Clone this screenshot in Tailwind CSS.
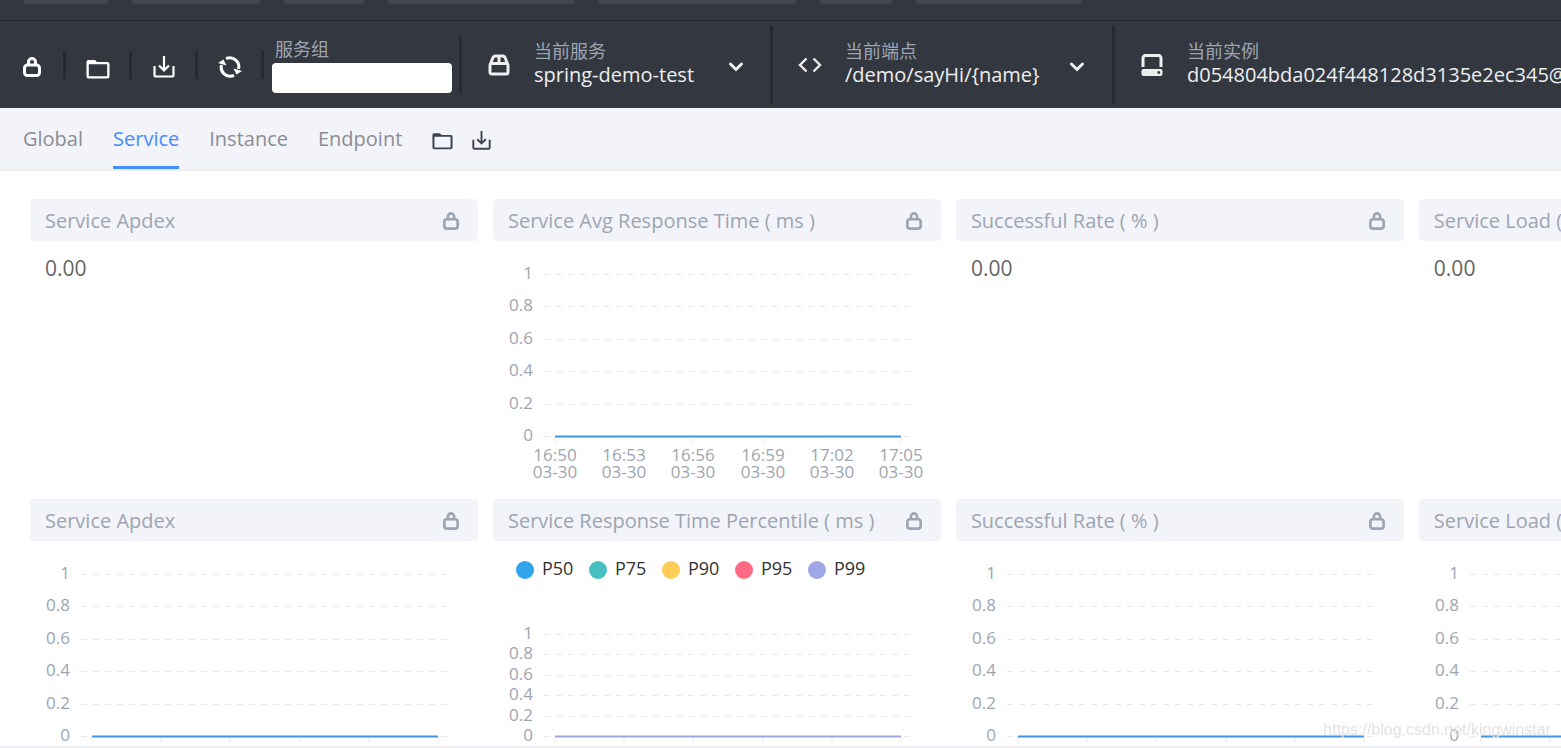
<!DOCTYPE html>
<html lang="zh">
<head>
    <meta charset="UTF-8">
    <meta name="viewport" content="width=device-width, initial-scale=1.0">
    <title>Dashboard</title>
    <script src="https://cdn.jsdelivr.net/npm/@tailwindcss/browser@4"></script>
</head>
<body class="flex flex-col h-screen overflow-hidden bg-white font-['Open_Sans','Noto_Sans_CJK_SC',sans-serif]">
    <!-- Icons -->
    <svg class="hidden">
        <symbol id="lock" viewBox="0 0 18 20" fill="none" stroke="currentColor" stroke-width="3">
            <rect x="1.5" y="8" width="15" height="10.5" rx="3"/>
            <path d="M5.500 8V5a3.500 3.500 0 0 1 7 0V8"/>
        </symbol>
        <symbol id="folder" viewBox="0 0 24 20">
            <path fill="currentColor" fill-rule="evenodd" d="M2.500 1H9l2 2H21.500a2 2 0 0 1 2 2V17.500a2 2 0 0 1-2 2H2.500a2 2 0 0 1-2-2V3a2 2 0 0 1 2-2ZM2.800 5.200V17.300H21.200V5.200Z"/>
        </symbol>
        <symbol id="download" viewBox="0 0 22 22" fill="none" stroke="currentColor" stroke-width="2.200">
            <path d="M1.500 10V19.500a1 1 0 0 0 1 1h17a1 1 0 0 0 1-1V10"/>
            <path d="M11 0V14M6 9.500L11 14.500L16 9.500"/>
        </symbol>
        <symbol id="chevron" viewBox="0 0 16 10" fill="none" stroke="currentColor" stroke-width="3" stroke-linecap="round">
            <path d="M2.500 2L8 7.500L13.500 2"/>
        </symbol>
    </svg>

    <header class="bg-[#333840] text-[#eeeeee] shrink-0">
        <!-- Dashboard templates -->
        <div class="h-[21px] border-b border-[#252a2f] flex gap-[23px] pl-[23px]">
            <div class="h-1 w-[86px] rounded-b bg-[#42464e]"></div>
            <div class="h-1 w-[128px] rounded-b bg-[#42464e]"></div>
            <div class="h-1 w-[82px] rounded-b bg-[#42464e]"></div>
            <div class="h-1 w-[187px] rounded-b bg-[#42464e]"></div>
            <div class="h-1 w-[198px] rounded-b bg-[#42464e]"></div>
            <div class="h-1 w-[74px] rounded-b bg-[#42464e]"></div>
            <div class="h-1 w-[166px] rounded-b bg-[#42464e]"></div>
        </div>

        <!-- Toolbar -->
        <div class="h-[87px] flex items-center">
            <div class="flex shrink-0 text-white">
                <button aria-label="Lock" class="w-[66px] h-7 border-r-3 border-[#252a2f] flex items-center justify-center">
                    <svg class="w-[18px] h-5 mt-1"><use href="#lock"/></svg>
                </button>
                <button aria-label="Import" class="w-[66px] h-7 border-r-3 border-[#252a2f] flex items-center justify-center">
                    <svg class="w-6 h-5 mt-2"><use href="#folder"/></svg>
                </button>
                <button aria-label="Export" class="w-[66px] h-7 border-r-3 border-[#252a2f] flex items-center justify-center">
                    <svg class="w-[22px] h-[22px] mt-1"><use href="#download"/></svg>
                </button>
                <button aria-label="Reload" class="w-[66px] h-7 border-r-3 border-[#252a2f] flex items-center justify-center">
                    <svg class="w-6 h-[22px] mt-1" viewBox="0 0 24 22" fill="none" stroke="currentColor" stroke-width="3">
                        <path d="M8 2.600A9 9 0 0 1 20.500 13M16 19.400A9 9 0 0 1 3.500 9"/>
                        <path fill="currentColor" stroke="none" d="M0 7L5.500 3.500L8.500 9.500ZM24 15L18.500 18.500L15.500 12.500Z"/>
                    </svg>
                </button>
            </div>
            <div class="h-[57px] w-[198px] shrink-0 border-r-3 border-[#252a2f] pl-2">
                <label for="group" class="block h-[27px] pl-[3px] text-[18px] leading-[27px] text-[#9da5b2]">服务组</label>
                <input id="group" type="text" class="block w-[180px] h-[30px] rounded bg-white px-2 text-black">
            </div>

            <button class="w-[311px] h-[78px] shrink-0 border-r-3 border-[#252a2f] flex items-center pl-[25px] text-left">
                <svg class="w-6 h-6" viewBox="0 0 24 24" fill="none" stroke="currentColor" stroke-width="3">
                    <path d="M3 12L6 4.500Q6.500 3 8 3H16Q17.500 3 18 4.500L21 12V19a2 2 0 0 1-2 2H5a2 2 0 0 1-2-2ZM3 10.500H21M12 3V10"/>
                </svg>
                <span class="ml-[23px] w-[194px] pb-1 whitespace-nowrap">
                    <span class="block text-[18px] leading-6 text-[#9da5b2]">当前服务</span>
                    <span class="block text-[20px] leading-6">spring-demo-test</span>
                </span>
                <svg class="w-4 h-[10px] mt-1"><use href="#chevron"/></svg>
            </button>
            <button class="w-[342px] h-[78px] shrink-0 border-r-3 border-[#252a2f] flex items-center pl-[25px] text-left">
                <svg class="w-6 h-6" viewBox="0 0 24 24" fill="none" stroke="currentColor" stroke-width="2.400">
                    <path d="M8.500 5.500L2 12L8.500 18.500M15.500 5.500L22 12L15.500 18.500"/>
                </svg>
                <span class="ml-[23px] w-[224px] pb-1 whitespace-nowrap">
                    <span class="block text-[18px] leading-6 text-[#9da5b2]">当前端点</span>
                    <span class="block text-[20px] leading-6">/demo/sayHi/{name}</span>
                </span>
                <svg class="w-4 h-[10px] mt-1"><use href="#chevron"/></svg>
            </button>
            <button class="h-[78px] shrink-0 flex items-center pl-[25px] text-left">
                <svg class="w-6 h-6" viewBox="0 0 24 24">
                    <path d="M3 14V5a2.500 2.500 0 0 1 2.500-2.500h13A2.500 2.500 0 0 1 21 5V14" fill="none" stroke="currentColor" stroke-width="3"/>
                    <path fill="currentColor" fill-rule="evenodd" d="M3.500 16H20.500a2 2 0 0 1 2 2V21a2 2 0 0 1-2 2H3.500a2 2 0 0 1-2-2V18a2 2 0 0 1 2-2ZM17.500 18.200V20.800H20.100V18.200Z"/>
                </svg>
                <span class="ml-[23px] pb-1 whitespace-nowrap">
                    <span class="block text-[18px] leading-6 text-[#9da5b2]">当前实例</span>
                    <span class="block text-[20px] leading-6">d054804bda024f448128d3135e2ec345@</span>
                </span>
            </button>
        </div>
    </header>

    <!-- Tabs -->
    <nav class="h-[63px] shrink-0 bg-[#f3f4f9] border-b-2 border-[#ebedf0] flex gap-[30px] pl-[23px] text-[20px] leading-[61px] text-[#8a8d93]">
        <a href="#">Global</a>
        <a href="#" class="border-b-3 border-[#448dfe] text-[#448dfe]">Service</a>
        <a href="#">Instance</a>
        <a href="#">Endpoint</a>
        <div class="flex items-center gap-[19px] text-[#3d444f]">
            <button aria-label="Import"><svg class="w-[21px] h-[18px] mt-1"><use href="#folder"/></svg></button>
            <button aria-label="Export"><svg class="w-[19px] h-[19px] mt-1"><use href="#download"/></svg></button>
        </div>
    </nav>

    <!-- Charts -->
    <main class="flex-1 min-h-0 overflow-hidden border-b-2 border-[#ebedf0]">
        <div class="w-[121%] grid grid-cols-4 auto-rows-[300px] gap-x-[15px] pl-[30px] pr-[22px] pt-7">
            <section>
                <h2 class="h-[42px] rounded bg-[#f3f4f9] flex items-center justify-between pt-px pl-[15px] pr-[19px] text-[20px] text-[#9da5b2]">
                    Service Apdex
                    <button aria-label="Lock"><svg class="w-4 h-[18px]"><use href="#lock"/></svg></button>
                </h2>
                <p class="px-[15px] pt-3 text-[21px] leading-[30px] text-[#656565]">0.00</p>
            </section>
            <section>
                <h2 class="h-[42px] rounded bg-[#f3f4f9] flex items-center justify-between pt-px pl-[15px] pr-[19px] text-[20px] text-[#9da5b2]">
                    Service Avg Response Time ( ms )
                    <button aria-label="Lock"><svg class="w-4 h-[18px]"><use href="#lock"/></svg></button>
                </h2>
                <div class="chart" data-top="34" data-color="#3f96e3" data-times="16:50,16:53,16:56,16:59,17:02,17:05"></div>
            </section>
            <section>
                <h2 class="h-[42px] rounded bg-[#f3f4f9] flex items-center justify-between pt-px pl-[15px] pr-[19px] text-[20px] text-[#9da5b2]">
                    Successful Rate ( % )
                    <button aria-label="Lock"><svg class="w-4 h-[18px]"><use href="#lock"/></svg></button>
                </h2>
                <p class="px-[15px] pt-3 text-[21px] leading-[30px] text-[#656565]">0.00</p>
            </section>
            <section>
                <h2 class="h-[42px] rounded bg-[#f3f4f9] flex items-center justify-between pt-px pl-[15px] pr-[19px] text-[20px] text-[#9da5b2]">
                    Service Load (
                    <button aria-label="Lock"><svg class="w-4 h-[18px]"><use href="#lock"/></svg></button>
                </h2>
                <p class="px-[15px] pt-3 text-[21px] leading-[30px] text-[#656565]">0.00</p>
            </section>

            <section>
                <h2 class="h-[42px] rounded bg-[#f3f4f9] flex items-center justify-between pt-px pl-[15px] pr-[19px] text-[20px] text-[#9da5b2]">
                    Service Apdex
                    <button aria-label="Lock"><svg class="w-4 h-[18px]"><use href="#lock"/></svg></button>
                </h2>
                <div class="chart" data-top="34" data-color="#3f96e3"></div>
            </section>
            <section class="relative">
                <h2 class="h-[42px] rounded bg-[#f3f4f9] flex items-center justify-between pt-px pl-[15px] pr-[19px] text-[20px] text-[#9da5b2]">
                    Service Response Time Percentile ( ms )
                    <button aria-label="Lock"><svg class="w-4 h-[18px]"><use href="#lock"/></svg></button>
                </h2>
                <ul class="absolute left-[23px] top-[57px] flex text-[18px] leading-6 text-[#333333]">
                    <li class="w-[73px] flex gap-2"><i class="w-[18px] h-[18px] mt-[5px] rounded-full bg-[#30a4eb]"></i>P50</li>
                    <li class="w-[73px] flex gap-2"><i class="w-[18px] h-[18px] mt-[5px] rounded-full bg-[#45bfc0]"></i>P75</li>
                    <li class="w-[73px] flex gap-2"><i class="w-[18px] h-[18px] mt-[5px] rounded-full bg-[#ffcc55]"></i>P90</li>
                    <li class="w-[73px] flex gap-2"><i class="w-[18px] h-[18px] mt-[5px] rounded-full bg-[#ff6a84]"></i>P95</li>
                    <li class="w-[73px] flex gap-2"><i class="w-[18px] h-[18px] mt-[5px] rounded-full bg-[#a0a7e6]"></i>P99</li>
                </ul>
                <div class="chart" data-top="94" data-color="#a0a7e6"></div>
            </section>
            <section>
                <h2 class="h-[42px] rounded bg-[#f3f4f9] flex items-center justify-between pt-px pl-[15px] pr-[19px] text-[20px] text-[#9da5b2]">
                    Successful Rate ( % )
                    <button aria-label="Lock"><svg class="w-4 h-[18px]"><use href="#lock"/></svg></button>
                </h2>
                <div class="chart" data-top="34" data-color="#3f96e3"></div>
            </section>
            <section>
                <h2 class="h-[42px] rounded bg-[#f3f4f9] flex items-center justify-between pt-px pl-[15px] pr-[19px] text-[20px] text-[#9da5b2]">
                    Service Load (
                    <button aria-label="Lock"><svg class="w-4 h-[18px]"><use href="#lock"/></svg></button>
                </h2>
                <div class="chart" data-top="34" data-color="#3f96e3"></div>
            </section>
        </div>
    </main>

    <div class="fixed right-[10px] bottom-2 font-['Liberation_Sans',sans-serif] text-[16px] leading-5 text-[#e2e2e2]">https://blog.csdn.net/kingwinstar</div>

    <script>
        const yLabels = ['1', '0.8', '0.6', '0.4', '0.2', '0'];
        const bottom = 196;

        function drawChart(el) {
            const width = el.clientWidth;
            const top = Number(el.dataset.top);
            const times = el.dataset.times ? el.dataset.times.split(',') : [];
            const left = 62;
            const right = width - 40;
            let out = '';

            yLabels.forEach((label, i) => {
                const y = Math.round(top + (bottom - top) * i / 5) - 0.5;
                out += `<line x1="51" x2="${right + 10}" y1="${y}" y2="${y}" stroke="#e8e8e8" stroke-width="1" stroke-dasharray="6 6"/>`;
                out += `<text x="40" y="${y + 4}" text-anchor="end">${label}</text>`;
            });

            for (let i = 0; i <= 5; i++) {
                const x = Math.round(left + (right - left) * i / 5);
                out += `<line x1="${x}" x2="${x}" y1="${bottom}" y2="${bottom + 6}" stroke="#e8e8e8"/>`;
                if (times[i]) {
                    out += `<text x="${x}" y="220" text-anchor="middle">${times[i]}</text>`;
                    out += `<text x="${x}" y="237" text-anchor="middle">03-30</text>`;
                }
            }

            out += `<line x1="${left}" x2="${right}" y1="${bottom - 0.5}" y2="${bottom - 0.5}" stroke="${el.dataset.color}" stroke-width="2"/>`;
            el.innerHTML = `<svg class="block w-full h-[250px] text-[17px] fill-[#9da5b2]">${out}</svg>`;
        }

        function drawAll() {
            document.querySelectorAll('.chart').forEach(drawChart);
        }

        window.addEventListener('DOMContentLoaded', drawAll);
        window.addEventListener('resize', drawAll);
    </script>
</body>
</html>
